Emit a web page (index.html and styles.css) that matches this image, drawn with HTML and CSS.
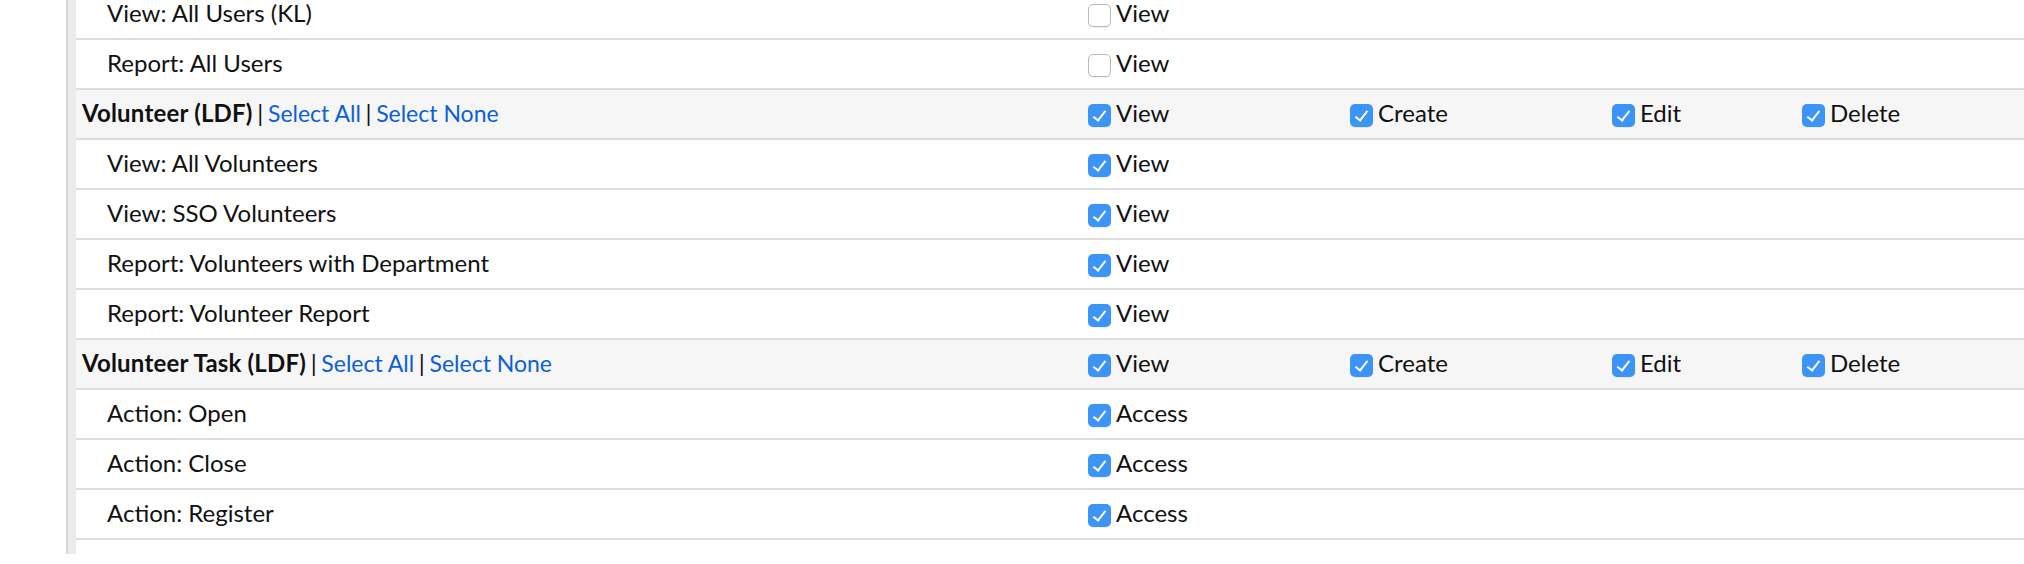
FILE: index.html
```html
<!DOCTYPE html>
<html>
<head>
<meta charset="utf-8">
<link rel="stylesheet" href="styles.css">
</head>
<body>
<div class="frame">
  <div class="table">
    <div class="row">
      <div class="label">View: All Users (KL)</div>
      <label class="perm"><span class="cb"></span>View</label>
    </div>
    <div class="row">
      <div class="label">Report: All Users</div>
      <label class="perm"><span class="cb"></span>View</label>
    </div>
    <div class="row head">
      <div class="label"><b>Volunteer (LDF)</b><span class="sep"> | </span><a href="#">Select All</a><span class="sep"> | </span><a href="#">Select None</a></div>
      <label class="perm"><span class="cb on"></span>View</label>
      <label class="perm"><span class="cb on"></span>Create</label>
      <label class="perm"><span class="cb on"></span>Edit</label>
      <label class="perm"><span class="cb on"></span>Delete</label>
    </div>
    <div class="row">
      <div class="label">View: All Volunteers</div>
      <label class="perm"><span class="cb on"></span>View</label>
    </div>
    <div class="row">
      <div class="label">View: SSO Volunteers</div>
      <label class="perm"><span class="cb on"></span>View</label>
    </div>
    <div class="row">
      <div class="label">Report: Volunteers with Department</div>
      <label class="perm"><span class="cb on"></span>View</label>
    </div>
    <div class="row">
      <div class="label">Report: Volunteer Report</div>
      <label class="perm"><span class="cb on"></span>View</label>
    </div>
    <div class="row head">
      <div class="label"><b>Volunteer Task (LDF)</b><span class="sep"> | </span><a href="#">Select All</a><span class="sep"> | </span><a href="#">Select None</a></div>
      <label class="perm"><span class="cb on"></span>View</label>
      <label class="perm"><span class="cb on"></span>Create</label>
      <label class="perm"><span class="cb on"></span>Edit</label>
      <label class="perm"><span class="cb on"></span>Delete</label>
    </div>
    <div class="row">
      <div class="label">Action: Open</div>
      <label class="perm"><span class="cb on"></span>Access</label>
    </div>
    <div class="row">
      <div class="label">Action: Close</div>
      <label class="perm"><span class="cb on"></span>Access</label>
    </div>
    <div class="row">
      <div class="label">Action: Register</div>
      <label class="perm"><span class="cb on"></span>Access</label>
    </div>
    <div class="row">
      <div class="label">Action: Waitlist</div>
      <label class="perm"><span class="cb on"></span>Access</label>
    </div>
  </div>
</div>
</body>
</html>
```
FILE: styles.css
```css
html, body {
  margin: 0;
  padding: 0;
  background: #ffffff;
  overflow: hidden;
}
body {
  font-family: Lato, "Open Sans", sans-serif;
  font-size: 24px;
  color: #111111;
}
.frame {
  margin-left: 66px;
  border-left: 2px solid #d6d6d6;
  background: #ececec;
  padding-left: 8px;
  height: 564px;
}
.table {
  background: #ffffff;
  margin-top: -10px;
}
.row {
  display: grid;
  grid-template-columns: 1012px 262px 262px 190px 1fr;
  align-items: center;
  height: 48px;
  border-bottom: 2px solid #dddddd;
}
.row.head {
  background: #f6f6f6;
}
.label {
  padding-left: 31px;
  margin-bottom: 3px;
  white-space: nowrap;
}
.head .label {
  padding-left: 6px;
}
.label b {
  font-weight: 700;
  letter-spacing: 0.2px;
}
.label .sep {
  word-spacing: -1.5px;
}
.label a {
  color: #0c60d6;
  font-size: 23px;
  text-decoration: none;
}
.perm {
  display: flex;
  align-items: center;
  margin-bottom: 3px;
  white-space: nowrap;
}
.cb {
  position: relative;
  flex: none;
  box-sizing: border-box;
  width: 23px;
  height: 23px;
  margin-right: 5px;
  margin-top: 6px;
  border-radius: 5px;
  border: 1px solid #b9b9b9;
  background: #ffffff;
  box-shadow: 0 1px 1px rgba(0,0,0,0.06);
}
.cb.on {
  border: none;
  background: #3c94f6;
}
.cb.on::after {
  content: "";
  position: absolute;
  left: 8px;
  top: 4px;
  width: 5px;
  height: 11px;
  border-right: 2px solid #ffffff;
  border-bottom: 2px solid #ffffff;
  transform: rotate(38deg);
}
```
